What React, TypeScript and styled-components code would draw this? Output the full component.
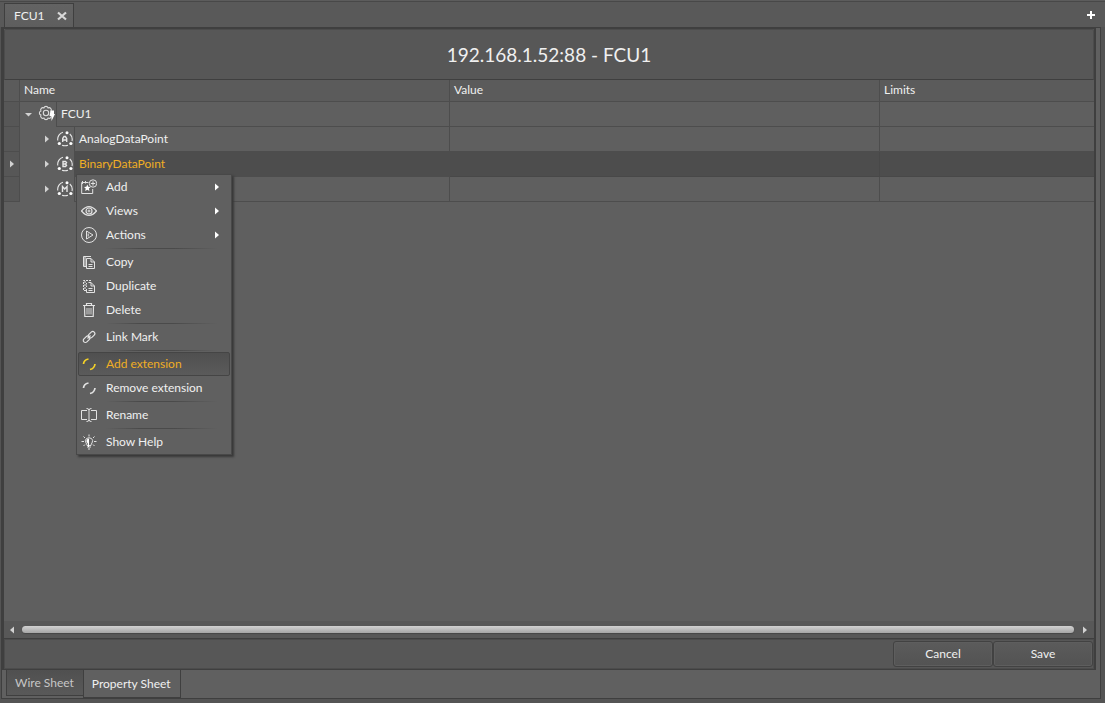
import React from "react";
import styled, { createGlobalStyle, css } from "styled-components";

const line = "#4d4d4d";
const dark = "#3f3f3f";
const text = "#f0f0f0";
const accent = "#f0ae24";

const GlobalStyle = createGlobalStyle`
  * { box-sizing: border-box; }
  body { margin: 0; background: #555; }
  body, button, table { font-family: Lato, "Liberation Sans", sans-serif; font-size: 12px; line-height: 16px; color: ${text}; }
  button { margin: 0; padding: 0; border: 0; background: none; }
  svg { display: block; flex: none; }
`;

const Page = styled.div`
  display: flex;
  flex-direction: column;
  min-height: 100vh;
  padding: 0 4px 4px 1px;
  background: #545454;
`;

const TopBar = styled.nav`
  display: flex;
  align-items: flex-end;
  height: 27px;
  margin: 0 -4px 0 -1px;
  padding: 0 9px 0 4px;
  background: linear-gradient(#5c5c5c 0 1px, #484848 1px 2px, #595959 2px);
`;

const TopTab = styled.div`
  display: flex;
  align-items: center;
  gap: 12px;
  height: 24px;
  padding: 0 6px 0 9px;
  border: 1px solid ${dark};
  border-bottom: 0;
  background: linear-gradient(#636363, #5e5e5e);
`;

const IconButton = styled.button`
  display: flex;
  align-items: center;
  justify-content: center;
`;

const NewTab = styled(IconButton)`
  height: 24px;
  margin-left: auto;
`;

const Frame = styled.div`
  display: flex;
  flex: 1;
  flex-direction: column;
  padding-right: 4px;
  border: 1px solid ${dark};
  background: #606060;
`;

const Panel = styled.main`
  position: relative;
  display: flex;
  flex: 1;
  flex-direction: column;
  border: solid ${dark};
  border-width: 1px 2px;
`;

const Title = styled.h1`
  display: flex;
  align-items: center;
  justify-content: center;
  height: 51px;
  margin: 0;
  border: 1px solid #4c4c4c;
  border-bottom-color: ${dark};
  border-radius: 2px 2px 0 0;
  background: #575757;
  font-size: 19px;
  font-weight: 400;
  line-height: 24px;
`;

const Sheet = styled.div`
  flex: 1;
  background: #5f5f5f;
`;

const Grid = styled.table`
  width: 100%;
  table-layout: fixed;
  border-spacing: 0;
`;

const HeadCell = styled.th`
  height: 22px;
  padding: 0 4px 2px;
  border: solid ${line};
  border-width: 0 1px 1px 0;
  background: #5b5b5b;
  font-weight: 400;
  text-align: left;
  &:last-child { border-right: 0; }
`;

const GutterCell = styled.td`
  height: 25px;
  padding: 0 0 0 4px;
  border: solid ${line};
  border-width: 0 1px 1px 0;
  background: #575757;
`;

const NameCell = styled.td`
  padding: 0;
  border-right: 1px solid ${line};
`;

const ValueCell = styled.td<{ $selected?: boolean }>`
  padding: 0;
  border: solid ${line};
  border-width: 0 1px 1px 0;
  background: ${(p) => (p.$selected ? "#4d4d4d" : "transparent")};
  ${(p) => p.$selected && css`border-color: #484848;`}
  &:last-child { border-right: 0; }
`;

const TreeLine = styled.div<{ $level: number }>`
  display: flex;
  align-items: flex-start;
  height: 25px;
  padding-left: ${(p) => p.$level * 18}px;
`;

const Expander = styled(IconButton)`
  width: 18px;
  height: 24px;
`;

const NodeIcon = styled.span`
  display: flex;
  align-items: center;
  justify-content: center;
  width: 18px;
  height: 24px;
`;

const NodeName = styled.span<{ $selected?: boolean }>`
  flex: 1;
  height: 25px;
  padding: 4px;
  border: solid ${line};
  border-width: 0 0 1px 1px;
  background: ${(p) => (p.$selected ? "#4d4d4d" : "transparent")};
  color: ${(p) => (p.$selected ? accent : text)};
`;

const ScrollBar = styled.div`
  display: flex;
  align-items: center;
  height: 18px;
  border-bottom: 1px solid ${dark};
  background: #585858;
`;

const ScrollArrow = styled(IconButton)`
  width: 18px;
  height: 17px;
`;

const Thumb = styled.div`
  flex: 1;
  height: 7px;
  margin-right: 2px;
  border-radius: 4px;
  background: linear-gradient(#d2d2d2, #a6a6a6);
  box-shadow: 0 1px 1px #484848;
`;

const Actions = styled.footer`
  display: flex;
  justify-content: flex-end;
  height: 30px;
  padding: 1px 0;
  border: 1px solid #4c4c4c;
  background: #575757;
`;

const ActionButton = styled.button`
  width: 100px;
  height: 26px;
  border: 1px solid #424242;
  border-radius: 3px;
  background: linear-gradient(#5b5b5b, #535353);
  box-shadow: inset 0 0 0 1px #5e5e5e;
`;

const SheetTabs = styled.nav`
  display: flex;
  align-items: flex-start;
  height: 28px;
  padding-left: 4px;
`;

const SheetTab = styled.button<{ $active?: boolean }>`
  height: ${(p) => (p.$active ? 28 : 26)}px;
  padding: 0 9px 0 8px;
  border: solid ${dark};
  border-width: ${(p) => (p.$active ? "0 1px 1px" : "0 0 1px 1px")};
  background: ${(p) => (p.$active ? "#606060" : "linear-gradient(#505050, #595959)")};
  color: ${(p) => (p.$active ? text : "#c6c6c6")};
`;

const Menu = styled.ul`
  position: absolute;
  top: 145px;
  left: 72px;
  width: 156px;
  margin: 0;
  padding: 0 1px;
  border: 1px solid #484848;
  background: #606060;
  box-shadow: 2px 2px 2px #383838;
  list-style: none;
`;

const MenuButton = styled.button<{ $active?: boolean }>`
  display: flex;
  align-items: center;
  width: 100%;
  height: 24px;
  padding-right: 8px;
  border: 1px solid ${(p) => (p.$active ? "#454545" : "transparent")};
  border-radius: 2px;
  background: ${(p) => (p.$active ? "linear-gradient(#505050, #5b5b5b)" : "none")};
  color: ${(p) => (p.$active ? accent : text)};
  text-align: left;
`;

const MenuIcon = styled.span`
  display: flex;
  justify-content: center;
  width: 20px;
  margin-right: 7px;
`;

const MenuLabel = styled.span`
  flex: 1;
`;

const Separator = styled.li`
  height: 3px;
  margin: 0 12px 0 28px;
  background: linear-gradient(90deg, transparent, #4a4a4a 30%, #4a4a4a 60%, transparent) 0 1px / 100% 1px no-repeat;
`;

type Direction = "left" | "right" | "down";

const trianglePaths: Record<Direction, string> = {
  left: "M5 .5v7L1 4z",
  right: "M2 .5v7L6 4z",
  down: "M0 3h7L3.5 6.500z",
};

const Triangle = ({ to, fill = "#d2d2d2" }: { to: Direction; fill?: string }) => (
  <svg width="8" height="8" viewBox="0 0 8 8" fill={fill} aria-hidden="true">
    <path d={trianglePaths[to]} />
  </svg>
);

const gearTeeth = 8;
const gearPoints = Array.from({ length: gearTeeth + 1 }, (_, i) => {
  const angle = ((i + 0.5) * 2 * Math.PI) / gearTeeth;
  return `${(8 + 5.5 * Math.cos(angle)).toFixed(2)} ${(8 + 5.5 * Math.sin(angle)).toFixed(2)}`;
});
const gearPath = `M${gearPoints[0]}` + gearPoints.slice(1).map((p) => `A2.2 2.2 0 0 1 ${p}`).join("");

const DeviceIcon = () => (
  <svg width="18" height="18" viewBox="0 0 18 18" fill="none" stroke="#dcdcdc" aria-hidden="true">
    <path d={gearPath} strokeWidth="1.100" />
    <circle cx="8" cy="8" r="2.700" strokeWidth="1.100" />
    <path d="M12.500 5.500h3.500v3.500h1l-3.500 7v-5h-2z" fill="#fff" stroke="none" />
  </svg>
);

const pointLetters: Record<string, string> = {
  A: "M5.700 11V7.500L7 5.500h1.400L9.700 7.500V11M5.700 9h4",
  B: "M6 5.500v5h2.500l1-1-1-1.500 1-1.500-1-1zM6 8h2.500",
  M: "M5.500 11V5.500L7.700 8 10 5.500V11",
};

const PointIcon = ({ letter }: { letter: string }) => (
  <svg width="16" height="16" viewBox="0 0 16 16" fill="none" stroke="#e6e6e6" aria-hidden="true">
    <path d="M.8 9.500A7.200 7.200 0 0 1 6 1.300M12.800 3a7.200 7.200 0 0 1 2.200 7M5 14.300q3 1 6 0" strokeWidth="1.100" />
    <path d={pointLetters[letter]} strokeWidth="1.400" />
    <g fill="#fff" stroke="none">
      <circle cx="10" cy="1.800" r="1.500" />
      <circle cx="2.300" cy="12.500" r="1.600" />
      <circle cx="13.900" cy="12.500" r="1.600" />
    </g>
  </svg>
);

const menuDrawings: Record<string, React.ReactNode> = {
  add: (
    <>
      <path d="M7.500 3.500H.7v11h11V10M1.500 5V2M4.500 4.500V2" />
      <circle cx="12" cy="4.500" r="3.700" />
      <path d="M12 2.300v4.400M9.800 4.500h4.400" />
      <path d="M6.300 5.500l1 2.200 2.400.3-1.800 1.600.5 2.400-2.100-1.200-2.100 1.200.5-2.400L3 8l2.300-.3z" fill="#fff" stroke="none" />
    </>
  ),
  views: (
    <>
      <path d="M.5 8Q8-.8 15.500 8 8 16.800 .5 8z" strokeWidth="1.200" />
      <circle cx="8" cy="8" r="3" strokeWidth="1.200" />
      <circle cx="8" cy="8" r="1" />
    </>
  ),
  actions: (
    <>
      <circle cx="8" cy="8" r="7.500" />
      <path d="M5.500 4v8L12 8zM7.200 6.500v3" />
    </>
  ),
  copy: (
    <path d="M5 12.500H2.500v-10H10M4 2.500v9.500M5.500 4.500H10l3.500 3.500v6.500h-8zM10 4.500V8h3.500M7.500 10.500h4M7.500 12.500h4" />
  ),
  duplicate: (
    <>
      <path d="M5 12.500H2.500v-10H10M4 3v9" strokeDasharray="2 1" />
      <path d="M7.500 4.500H10l3.500 3.500v6.500h-8V11M10 4.500V8h3.500M7.500 10.500h4M7.500 12.500h4" />
      <path d="M5.500 5v5" strokeDasharray="1.500 1" />
    </>
  ),
  delete: (
    <>
      <path d="M2 3.500h12M5.500 3V1.500h5V3M3.500 4l.3 10.500h8.400L12.500 4" strokeWidth="1.200" />
      <path d="M6 6v6.500M8 6v6.500M10 6v6.500" strokeWidth=".9" />
    </>
  ),
  link: (
    <g strokeWidth="1.200">
      <rect x="6.800" y="3.700" width="7.500" height="4.200" rx="2.100" transform="rotate(-45 10.500 5.750)" />
      <rect x="1.800" y="8.200" width="7.500" height="4.200" rx="2.100" transform="rotate(-45 5.500 10.250)" />
      <path d="M6.500 9.500l3-3" />
    </g>
  ),
  extension: <path d="M2.500 8Q2.700 4 7.500 3M14 8Q13.500 12.500 9 13.500" strokeWidth="1.700" />,
  rename: <path d="M6 3.500H.5v9H6M10 3.500h5.500v9H10M8 2v12M5.500 1.500Q8 1.500 8 3 8 1.500 10.500 1.500M5.500 14.500Q8 14.500 8 13 8 14.500 10.500 14.500" />,
  help: (
    <>
      <path d="M6 11.500Q6 10 5 9 3.500 6 5.500 4.500 8 3 10.500 4.500 12.500 6 11 9 10 10 10 11.500zM6 13h4M7 15h2" />
      <path d="M8 4.500Q5 5 5.500 7.500L7 10v3h1z" fill="#fff" stroke="none" />
      <path d="M8 .5v2M2.500 2.500L4 4M13.500 2.500L12 4M.5 7.500h2.500M13 7.500h2.500M2.500 12L4 10.500M13.500 12L12 10.500" />
    </>
  ),
};

const MenuGlyph = ({ name, color = "#e2e2e2" }: { name: string; color?: string }) => (
  <svg width="16" height="16" viewBox="0 0 16 16" fill="none" stroke={color} aria-hidden="true">
    {menuDrawings[name]}
  </svg>
);

type MenuEntry = { label: string; icon: string; submenu?: boolean; active?: boolean };

const menuGroups: MenuEntry[][] = [
  [
    { label: "Add", icon: "add", submenu: true },
    { label: "Views", icon: "views", submenu: true },
    { label: "Actions", icon: "actions", submenu: true },
  ],
  [
    { label: "Copy", icon: "copy" },
    { label: "Duplicate", icon: "duplicate" },
    { label: "Delete", icon: "delete" },
  ],
  [{ label: "Link Mark", icon: "link" }],
  [
    { label: "Add extension", icon: "extension", active: true },
    { label: "Remove extension", icon: "extension" },
  ],
  [{ label: "Rename", icon: "rename" }],
  [{ label: "Show Help", icon: "help" }],
];

type Row = { id: string; name?: string; level: number; letter?: string; selected?: boolean };

const rows: Row[] = [
  { id: "device", name: "FCU1", level: 0 },
  { id: "analog", name: "AnalogDataPoint", level: 1, letter: "A" },
  { id: "binary", name: "BinaryDataPoint", level: 1, letter: "B", selected: true },
  { id: "multi", level: 1, letter: "M" },
];

const ContextMenu = () => (
  <Menu>
    {menuGroups.map((group, index) => (
      <React.Fragment key={group[0].label}>
        {index > 0 && <Separator role="separator" />}
        {group.map((entry) => (
          <li key={entry.label}>
            <MenuButton type="button" $active={entry.active}>
              <MenuIcon>
                <MenuGlyph name={entry.icon} color={entry.active ? "#f5d228" : undefined} />
              </MenuIcon>
              <MenuLabel>{entry.label}</MenuLabel>
              {entry.submenu && <Triangle to="right" fill="#fff" />}
            </MenuButton>
          </li>
        ))}
      </React.Fragment>
    ))}
  </Menu>
);

export default function App() {
  return (
    <>
      <GlobalStyle />
      <Page>
        <TopBar>
          <TopTab>
            <span>FCU1</span>
            <IconButton type="button" aria-label="Close tab">
              <svg width="10" height="10" viewBox="0 0 10 10" stroke="#d8d8d8" strokeWidth="2.200" aria-hidden="true">
                <path d="M1 1.500l8 7M9 1.500l-8 7" />
              </svg>
            </IconButton>
          </TopTab>
          <NewTab type="button" aria-label="New tab">
            <svg width="10" height="10" viewBox="0 0 10 10" fill="#fff" aria-hidden="true">
              <path d="M4 1h2v3h3v2H6v3H4V6H1V4h3z" />
            </svg>
          </NewTab>
        </TopBar>
        <Frame>
          <Panel>
            <Title>192.168.1.52:88 - FCU1</Title>
            <Sheet>
              <Grid>
                <colgroup>
                  <col width="16" />
                  <col width="430" />
                  <col width="430" />
                  <col />
                </colgroup>
                <thead>
                  <tr>
                    <HeadCell as="td" />
                    <HeadCell scope="col">Name</HeadCell>
                    <HeadCell scope="col">Value</HeadCell>
                    <HeadCell scope="col">Limits</HeadCell>
                  </tr>
                </thead>
                <tbody>
                  {rows.map((row) => (
                    <tr key={row.id}>
                      <GutterCell>{row.selected && <Triangle to="right" />}</GutterCell>
                      <NameCell>
                        <TreeLine $level={row.level}>
                          <Expander type="button" aria-label={row.level ? "Expand" : "Collapse"}>
                            <Triangle to={row.level ? "right" : "down"} />
                          </Expander>
                          <NodeIcon>{row.letter ? <PointIcon letter={row.letter} /> : <DeviceIcon />}</NodeIcon>
                          <NodeName $selected={row.selected}>{row.name}</NodeName>
                        </TreeLine>
                      </NameCell>
                      <ValueCell $selected={row.selected} />
                      <ValueCell $selected={row.selected} />
                    </tr>
                  ))}
                </tbody>
              </Grid>
            </Sheet>
            <ScrollBar>
              <ScrollArrow type="button" aria-label="Scroll left">
                <Triangle to="left" />
              </ScrollArrow>
              <Thumb />
              <ScrollArrow type="button" aria-label="Scroll right">
                <Triangle to="right" />
              </ScrollArrow>
            </ScrollBar>
            <Actions>
              <ActionButton type="button">Cancel</ActionButton>
              <ActionButton type="button">Save</ActionButton>
            </Actions>
            <ContextMenu />
          </Panel>
          <SheetTabs>
            <SheetTab type="button">Wire Sheet</SheetTab>
            <SheetTab type="button" $active>
              Property Sheet
            </SheetTab>
          </SheetTabs>
        </Frame>
      </Page>
    </>
  );
}
